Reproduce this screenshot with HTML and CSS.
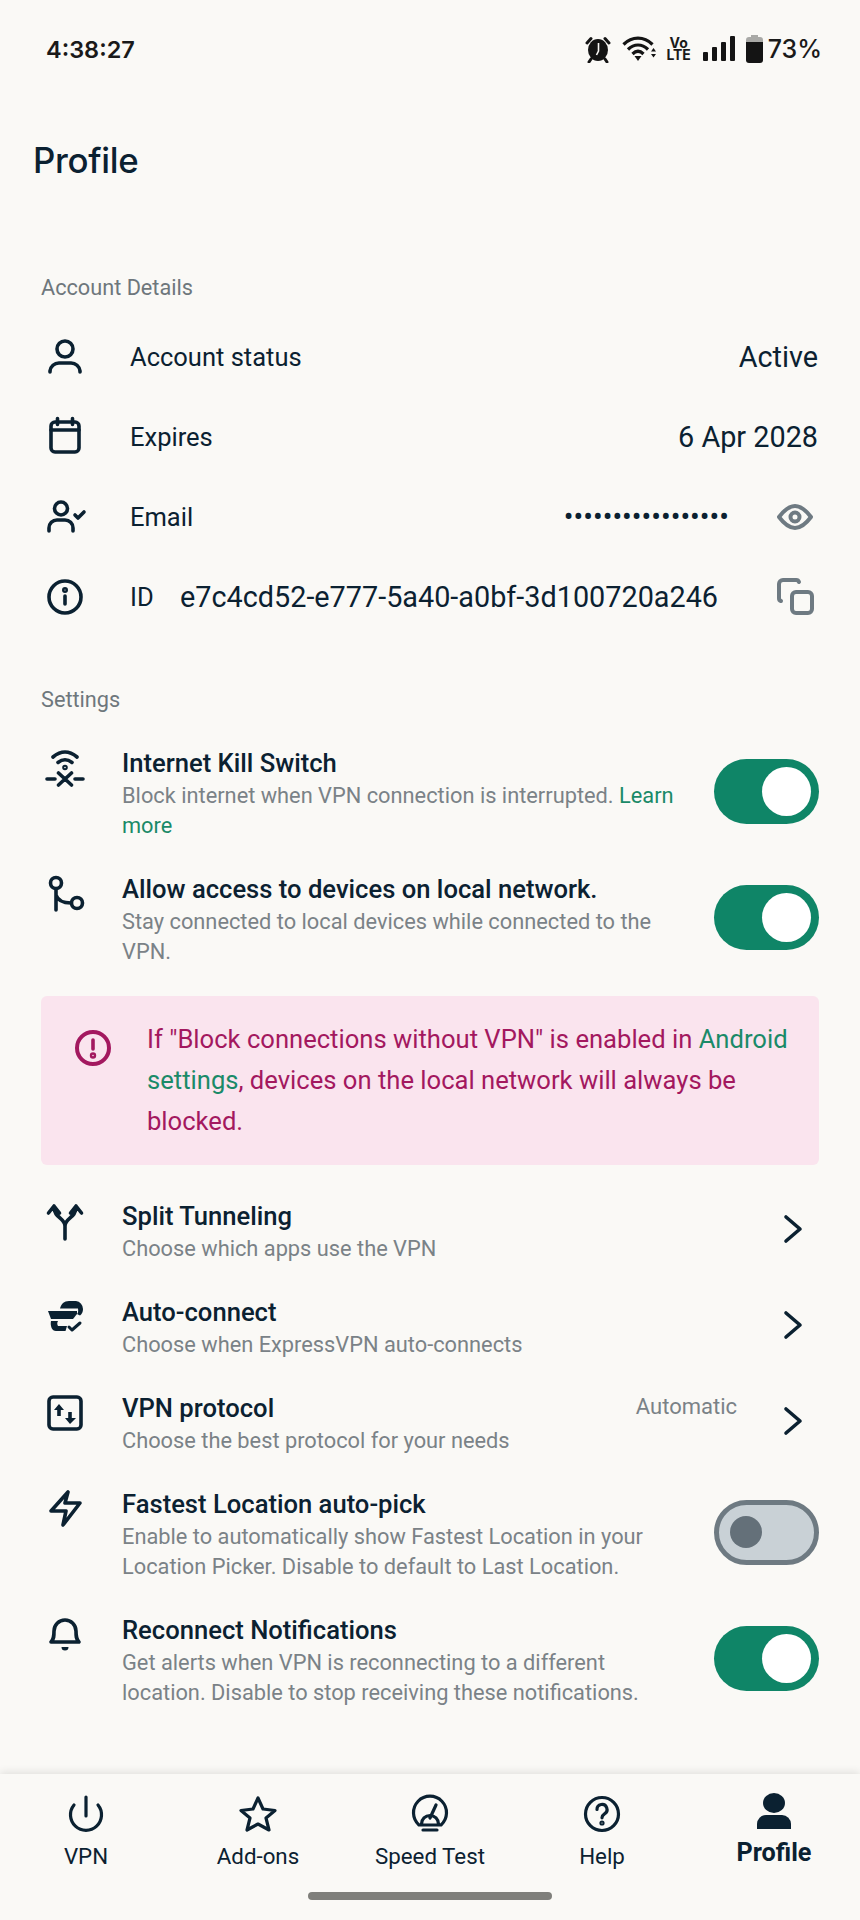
FILE: index.html
```html
<!DOCTYPE html>
<html lang="en">
<head>
<meta charset="utf-8">
<title>Profile</title>
<link rel="stylesheet" href="styles.css">
</head>
<body>
<header class="status">
  <span class="time">4:38:27</span>
  <div class="status-icons">
    <svg class="s-alarm" width="26" height="28" viewBox="0 0 26 28"><path d="M2 8 6 3.500M24 8l-4-4.500" class="blk-line"/><ellipse cx="13" cy="15" rx="10" ry="11" class="blk"/><path d="M13.500 8v8l-2 4" class="wht-line"/><path d="M6 24l-2 3M20 24l2 3" class="blk-line"/></svg>
    <svg class="s-wifi" width="36" height="26" viewBox="0 0 36 26"><path d="M1.500 8.500C10 0 22 0 30.500 8.500M6 13.500C12 7.500 20 7.500 26 13.500M10.500 18C14 14.500 18 14.500 21.500 18" class="blk-wifi"/><path d="M12.500 20h7L16 25z" class="blk"/><path d="M29 15.500h5l-2.500-3.500zM29 18h5l-2.500 3.500z" class="blk"/></svg>
    <span class="volte"><span>Vo</span><span>LTE</span></span>
    <svg class="s-signal" width="33" height="26" viewBox="0 0 33 26"><rect x="1" y="16" width="5" height="9" rx="1" class="blk"/><rect x="10" y="11" width="5" height="14" rx="1" class="blk"/><rect x="19" y="6" width="5" height="19" rx="1" class="blk"/><rect x="28" y="0" width="5" height="25" rx="1" class="blk"/></svg>
    <svg class="s-batt" width="17" height="28" viewBox="0 0 17 28"><path d="M5 0h7v2h2a3 3 0 0 1 3 3v3H0V5a3 3 0 0 1 3-3h2z" fill="#a9a9a6"/><path d="M0 7h17v18a3 3 0 0 1-3 3H3a3 3 0 0 1-3-3z" class="blk"/></svg>
    <span class="pct">73%</span>
  </div>
</header>

<h1 class="title">Profile</h1>

<main class="content">
  <h2 class="section first">Account Details</h2>

  <div class="info-row">
    <svg class="icon" viewBox="0 0 44 44"><circle cx="22" cy="14" r="8"/><path d="M7 37v-1a9 9 0 0 1 9-8h12a9 9 0 0 1 9 8v1"/></svg>
    <span class="info-label">Account status</span>
    <span class="info-value">Active</span>
  </div>
  <div class="info-row">
    <svg class="icon" viewBox="0 0 44 44"><rect x="8" y="7" width="28" height="30" rx="4"/><path d="M8 15h28M14.500 3.500v6M29.500 3.500v6"/></svg>
    <span class="info-label">Expires</span>
    <span class="info-value">6 Apr 2028</span>
  </div>
  <div class="info-row">
    <svg class="icon" viewBox="0 0 44 44"><circle cx="18" cy="13.500" r="6.500"/><path d="M6 36v-3a8 8 0 0 1 8-8h8a8 8 0 0 1 8 8v3M32 20l3 3 6-6"/></svg>
    <span class="info-label">Email</span>
    <span class="info-value dots">•••••••••••••••••</span>
    <svg class="icon action" viewBox="0 0 44 44"><path d="M6 22c6-8 11-11 16-11s10 3 16 11c-6 8-11 11-16 11S12 30 6 22z"/><circle cx="22" cy="22" r="4.500"/></svg>
  </div>
  <div class="info-row">
    <svg class="icon" viewBox="0 0 44 44"><circle cx="22" cy="22" r="16"/><path d="M22 21v8"/><circle cx="22" cy="15" r="1.200"/></svg>
    <span class="info-label id-label">ID</span>
    <span class="id-value">e7c4cd52-e777-5a40-a0bf-3d100720a246</span>
    <svg class="icon action" viewBox="0 0 44 44"><rect x="19" y="17" width="20" height="21" rx="4"/><path d="M8 26a3 3 0 0 1-2-3V9a4 4 0 0 1 4-4h13a3 3 0 0 1 3 2"/></svg>
  </div>

  <h2 class="section">Settings</h2>

  <div class="setting two-line">
    <svg class="icon" viewBox="0 0 44 44"><path d="M10 10Q22 0 34 10M15 15.500Q22 10 29 15.500M15.500 26l13 12M28.500 26l-13 12M4 32h8M32 32h8"/><circle cx="22" cy="20.500" r="1"/></svg>
    <div class="setting-text">
      <div class="setting-title">Internet Kill Switch</div>
      <p class="setting-desc">Block internet when VPN connection is interrupted. <a class="link">Learn more</a></p>
    </div>
    <span class="toggle on"></span>
  </div>

  <div class="setting two-line">
    <svg class="icon" viewBox="0 0 44 44"><circle cx="13" cy="10" r="5.500"/><circle cx="34" cy="30" r="5.500"/><path d="M13 16v21M13 22c2 6 7 8 15 8"/></svg>
    <div class="setting-text">
      <div class="setting-title">Allow access to devices on local network.</div>
      <p class="setting-desc">Stay connected to local devices while connected to the VPN.</p>
    </div>
    <span class="toggle on"></span>
  </div>

  <div class="banner">
    <svg class="icon alert" viewBox="0 0 44 44"><circle cx="22" cy="22" r="16"/><path d="M22 14v9"/><circle cx="22" cy="29.500" r="1.200"/></svg>
    <p class="banner-text">If "Block connections without VPN" is enabled in <a class="link">Android settings</a>, devices on the local network will always be blocked.</p>
  </div>

  <div class="setting nav-row first-nav">
    <svg class="icon" viewBox="0 0 44 44"><path d="M22 39V26C22 18 11 18 11 7M22 26C22 18 33 18 33 7M5.500 13 11 6l5.500 7M27.500 13 33 6l5.500 7"/></svg>
    <div class="setting-text">
      <div class="setting-title">Split Tunneling</div>
      <p class="setting-desc">Choose which apps use the VPN</p>
    </div>
    <svg class="chevron" viewBox="0 0 24 32"><path d="M4 4l14 12L4 28"/></svg>
  </div>

  <div class="setting nav-row">
    <svg class="icon solid" viewBox="0 0 44 44"><path d="M17 12.500C18 8 21 5 26 5h7a8 8 0 0 1 7 8c0 3-1 5-3 6.500l-3-1.500c1-1 1.500-2.500 1-5.500z"/><path d="M5 15h29v3l-4 5H8z"/><path d="M8 25h7c-1 2-1 3 0 5h9l-1.500 5H13c-4 0-6-5-5-10z"/><path class="check" d="M26 31l3 3 8-7"/></svg>
    <div class="setting-text">
      <div class="setting-title">Auto-connect</div>
      <p class="setting-desc">Choose when ExpressVPN auto-connects</p>
    </div>
    <svg class="chevron" viewBox="0 0 24 32"><path d="M4 4l14 12L4 28"/></svg>
  </div>

  <div class="setting nav-row">
    <svg class="icon" viewBox="0 0 44 44"><rect x="6" y="5" width="32" height="32" rx="4"/><path class="fill" d="M16 12l5 6h-3.200v6h-3.600v-6H11zM27 32l-5-6h3.200v-6h3.600v6H33z"/></svg>
    <div class="setting-text">
      <div class="setting-title">VPN protocol</div>
      <p class="setting-desc">Choose the best protocol for your needs</p>
    </div>
    <span class="trail">Automatic</span>
    <svg class="chevron" viewBox="0 0 24 32"><path d="M4 4l14 12L4 28"/></svg>
  </div>

  <div class="setting two-line">
    <svg class="icon" viewBox="0 0 44 44"><path d="M25 4 22 15h15L20 37l3-14H8z"/></svg>
    <div class="setting-text">
      <div class="setting-title">Fastest Location auto-pick</div>
      <p class="setting-desc">Enable to automatically show Fastest Location in your Location Picker. Disable to default to Last Location.</p>
    </div>
    <span class="toggle off"></span>
  </div>

  <div class="setting two-line">
    <svg class="icon" viewBox="0 0 44 44"><path d="M8 28c3-3 3-6 3-11a11 11 0 0 1 22 0c0 5 0 8 3 11z"/><path class="fill" d="M18.500 33h7a3.500 3.500 0 0 1-7 0z"/></svg>
    <div class="setting-text">
      <div class="setting-title">Reconnect Notifications</div>
      <p class="setting-desc">Get alerts when VPN is reconnecting to a different location. Disable to stop receiving these notifications.</p>
    </div>
    <span class="toggle on"></span>
  </div>
</main>

<nav class="tabs">
  <div class="tab-list">
    <div class="tab">
      <svg class="icon" viewBox="0 0 44 44"><path d="M22 5v19M10 13a15.500 15.500 0 1 0 24 0"/></svg>
      <span>VPN</span>
    </div>
    <div class="tab">
      <svg class="icon" viewBox="0 0 44 44"><path d="M22 6l5 11 12 1.500-9 7.500 3 12-11-6-11 6 3-12-9-7.500L17 17z"/></svg>
      <span>Add-ons</span>
    </div>
    <div class="tab">
      <svg class="icon" viewBox="0 0 44 44"><path d="M11 33a16.500 16.500 0 1 1 22 0zM15 38h14M13.500 32a8.500 8.500 0 0 1 17 0M22 26l6-13"/></svg>
      <span>Speed Test</span>
    </div>
    <div class="tab">
      <svg class="icon" viewBox="0 0 44 44"><circle cx="22" cy="22" r="16.500"/><path d="M17 17.500a5 5 0 1 1 7.500 4.300c-1.500 1-2.500 2-2.500 4"/><circle cx="22" cy="31" r="1"/></svg>
      <span>Help</span>
    </div>
    <div class="tab active">
      <svg class="icon solid" viewBox="0 0 44 44"><ellipse cx="22" cy="11" rx="11" ry="10"/><path d="M5 37v-5a9 9 0 0 1 9-9h16a9 9 0 0 1 9 9v5z"/></svg>
      <span>Profile</span>
    </div>
  </div>
  <div class="home-bar"></div>
</nav>
</body>
</html>
```
FILE: styles.css
```css
* { box-sizing: border-box; }
html, body { margin: 0; padding: 0; }
body {
  width: 860px;
  height: 1920px;
  display: flex;
  flex-direction: column;
  background: #faf9f6;
  color: #0b2131;
  font-family: Roboto, "Liberation Sans", sans-serif;
  overflow: hidden;
}
.status {
  height: 98px;
  display: flex;
  align-items: center;
  justify-content: space-between;
  padding: 0 38px 0 46px;
  color: #1a1a1a;
  font-family: Inter, sans-serif;
}
.time { font-size: 23.500px; font-weight: 600; }
.status-icons { display: flex; align-items: center; }
.blk { fill: #141414; }
.blk-line { fill: none; stroke: #141414; stroke-width: 3; stroke-linecap: round; }
.wht-line { fill: none; stroke: #faf9f6; stroke-width: 1.6; }
.blk-wifi { fill: none; stroke: #141414; stroke-width: 3.200; }
.s-wifi { margin-left: 11px; }
.volte {
  display: flex;
  flex-direction: column;
  align-items: center;
  margin-left: 9px;
  font-size: 14px;
  font-weight: 700;
  line-height: 12.500px;
  width: 24px;
}
.s-signal { margin-left: 11px; }
.s-batt { margin-left: 11px; }
.pct { margin-left: 5px; font-size: 25px; font-weight: 500; }
.title {
  margin: 0;
  height: 124px;
  line-height: 124px;
  padding-left: 33px;
  font-family: Inter, sans-serif;
  font-size: 34.800px;
  font-weight: 500;
  letter-spacing: -0.3px;
}
.content { padding: 0 41px; }
.section {
  margin: 47px 0 0;
  height: 30px;
  line-height: 31px;
  font-size: 21.700px;
  font-weight: 400;
  color: #6e777c;
}
.section.first { margin-top: 50px; margin-bottom: 15px; }
.info-row {
  height: 80px;
  display: flex;
  align-items: center;
  font-size: 25.500px;
}
.icon {
  width: 44px;
  height: 44px;
  flex: none;
  fill: none;
  stroke: #0b2131;
  stroke-width: 3.600;
  stroke-linecap: round;
  stroke-linejoin: round;
}
.info-row > .icon:first-child { margin-left: 2px; }
.info-label { margin-left: 43px; }
.id-label { width: 50px; flex: none; }
.id-value { font-size: 28.800px; white-space: nowrap; }
.info-value { margin-left: auto; margin-right: 1px; font-size: 28.800px; }
.dots { letter-spacing: 0; margin-right: 44px; }
.action { stroke: #6e7a82; stroke-width: 4; margin-left: auto; margin-right: 2px; }
.dots + .action { margin-left: 0; }
.setting {
  display: flex;
  align-items: flex-start;
  margin-top: 32px;
}
.setting > .icon:first-child { margin: 0 35px 0 2px; }
.setting-text { flex: 1; min-width: 0; }
.setting-title {
  height: 32px;
  line-height: 32px;
  font-size: 25.600px;
  font-weight: 500;
  white-space: nowrap;
}
.setting-desc {
  margin: 2px 0 0;
  font-size: 21.800px;
  line-height: 30px;
  color: #7a8287;
}
.two-line .setting-text { padding-right: 34px; }
.link { color: #1a8a68; }
.section + .setting { margin-top: 33px; }
.toggle {
  flex: none;
  position: relative;
  width: 105px;
  height: 65px;
  margin-top: 12px;
  border-radius: 33px;
}
.toggle::after {
  content: "";
  position: absolute;
  border-radius: 50%;
}
.toggle.on { background: #0f8567; }
.toggle.on::after {
  width: 49px;
  height: 49px;
  right: 8px;
  top: 8px;
  background: #fff;
}
.toggle.off {
  background: #c9d1d6;
  border: 5px solid #6e7a82;
}
.toggle.off::after {
  width: 32px;
  height: 32px;
  left: 11px;
  top: 11px;
  background: #647079;
}
.banner {
  display: flex;
  align-items: flex-start;
  height: 169px;
  margin-top: 29px;
  padding: 23px 22px 23px 30px;
  background: #fae4ee;
  border-radius: 6px;
}
.alert { stroke: #a3185f; margin-top: 7px; }
.alert circle { stroke-width: 4; }
.banner-text {
  margin: 0 0 0 32px;
  font-size: 25.600px;
  line-height: 41px;
  color: #a3185f;
}
.first-nav { margin-top: 35px; }
.nav-row { min-height: 64px; }
.solid { fill: #0b2131; stroke: none; }
.fill { fill: #0b2131; stroke: none; }
.check { fill: none; stroke: #0b2131; stroke-width: 3; }
.chevron {
  flex: none;
  width: 24px;
  height: 32px;
  margin: 13px 13px 0 0;
  fill: none;
  stroke: #0b2131;
  stroke-width: 3.600;
  stroke-linecap: round;
  stroke-linejoin: round;
}
.trail {
  font-size: 22px;
  line-height: 30px;
  color: #7a8287;
  margin-right: 45px;
}
.tabs {
  margin-top: auto;
  height: 146px;
  background: #faf9f6;
  box-shadow: 0 -2px 8px rgba(0, 0, 0, 0.1);
  display: flex;
  flex-direction: column;
  align-items: center;
}
.tab-list { width: 100%; display: flex; padding-top: 18px; }
.tab {
  flex: 1;
  display: flex;
  flex-direction: column;
  align-items: center;
  font-size: 22.300px;
  line-height: 28px;
}
.tab .icon { stroke-width: 3.200; margin-bottom: 6px; }
.tab.active { font-size: 25.200px; font-weight: 700; }
.tab.active .icon { stroke: none; margin-bottom: 3px; }
.home-bar {
  width: 244px;
  height: 8px;
  margin-top: 22px;
  border-radius: 4px;
  background: #7f7f7b;
}
```
